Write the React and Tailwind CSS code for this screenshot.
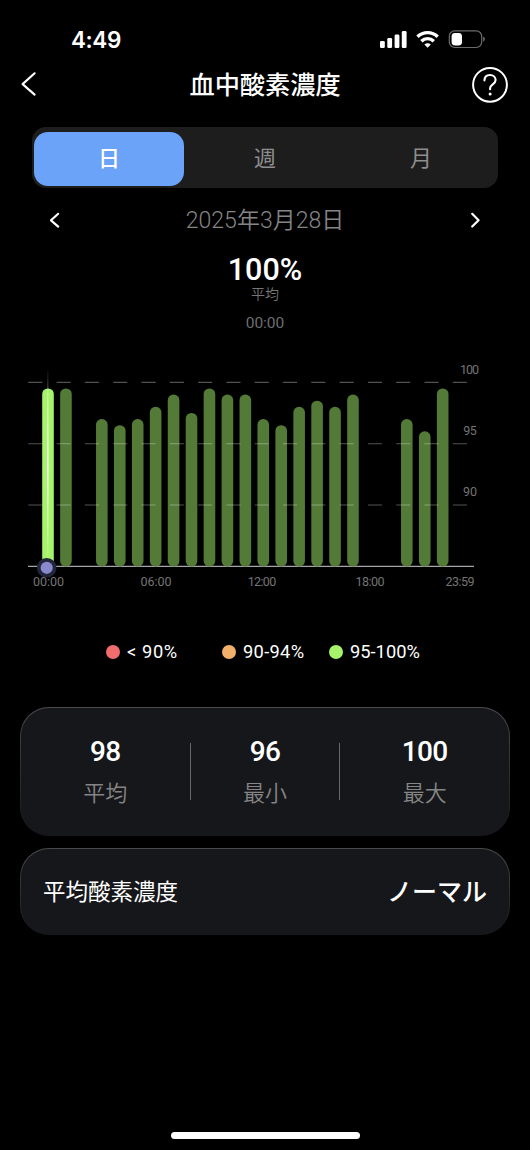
import React, { useState } from 'react';

// half-percent steps below the 100% mark, one entry per hour (null = no reading)
const hourly = [0, 0, null, 5, 6, 5, 3, 1, 4, 0, 1, 1, 5, 6, 3, 2, 3, 1, null, null, 5, 7, 0];

const tabs = ['日', '週', '月'];

const legend = [
  { label: '< 90%', dot: 'bg-[#f16c6c]', width: 'w-[116px]', text: 'tracking-[0.6px]' },
  { label: '90-94%', dot: 'bg-[#f2b06b]', width: 'w-[107px]', text: 'tracking-[0.3px]' },
  { label: '95-100%', dot: 'bg-[#a6f36b]', width: 'w-[92px]', text: 'tracking-normal' },
];

const stats = [
  { value: '98', label: '平均' },
  { value: '96', label: '最小' },
  { value: '100', label: '最大' },
];

function StatusBar() {
  return (
    <div className="flex h-[60px] items-start justify-between pt-[26px] pr-11 pl-[71px]">
      <span className="font-[Inter,sans-serif] text-[22.5px] leading-7 font-semibold tracking-[-0.4px]">4:49</span>
      <div className="flex items-center pt-[3px]">
        <svg width="28" height="20" viewBox="0 0 28 20" fill="white">
          <rect x="0" y="12" width="4.8" height="7" rx="1.3" />
          <rect x="7.3" y="9" width="4.8" height="10" rx="1.3" />
          <rect x="14.6" y="5.6" width="4.8" height="13.4" rx="1.3" />
          <rect x="21.8" y="2" width="4.8" height="17" rx="1.3" />
        </svg>
        <svg width="24" height="20" viewBox="0 0 24 20" className="ml-2" fill="none" stroke="white" strokeWidth="3.4">
          <path d="M1.5 7.8a14.4 14.4 0 0 1 20.2 0" />
          <path d="M5.4 12.2a8.8 8.8 0 0 1 12.4 0" />
          <path d="M11.6 18.8l-3.2-3.3a4.6 4.6 0 0 1 6.4 0z" fill="white" stroke="none" />
        </svg>
        <svg width="38" height="20" viewBox="0 0 38 20" className="ml-2">
          <rect x="1.3" y="1.9" width="32.4" height="16.6" rx="5.4" fill="none" stroke="#6b6b6b" strokeWidth="1.2" />
          <rect x="3.6" y="4" width="10.4" height="12.4" rx="3.4" fill="white" />
          <path d="M35.2 7.5v5.2c1.2-.4 1.7-1.4 1.7-2.6s-.5-2.2-1.7-2.6z" fill="#6b6b6b" />
        </svg>
      </div>
    </div>
  );
}

function Header() {
  return (
    <header className="flex h-[67px] items-start justify-between pt-[6px] pr-[23px] pl-5">
      <button className="mt-1.5 w-9" aria-label="戻る">
        <svg width="18" height="26" viewBox="0 0 18 26" fill="none" stroke="white" strokeWidth="2.1" strokeLinecap="round" strokeLinejoin="round">
          <path d="M14.6 1.3L2.6 12.1l12 10.5" />
        </svg>
      </button>
      <h1 className="ml-[3px] pt-px text-[25.2px] leading-[38px] font-medium">血中酸素濃度</h1>
      <button className="w-9" aria-label="ヘルプ">
        <svg width="38" height="38" viewBox="0 0 38 38" fill="none" stroke="white" strokeLinecap="round">
          <circle cx="19" cy="18.8" r="16.9" strokeWidth="2" />
          <path d="M13.4 14.4c.2-3.4 2.5-5.4 5.6-5.4 3.3 0 5.6 2.1 5.6 5 0 4.3-5.5 4.4-5.5 8.3v1" strokeWidth="2.1" />
          <circle cx="19.1" cy="27.9" r="1.5" fill="white" stroke="none" />
        </svg>
      </button>
    </header>
  );
}

function Chart() {
  return (
    <svg width="530" height="250" viewBox="0 350 530 250" className="block shrink-0">
      <defs>
        <linearGradient id="cursor" gradientUnits="userSpaceOnUse" x1="0" y1="368" x2="0" y2="566">
          <stop offset="0" stopColor="white" stopOpacity="0" />
          <stop offset="0.5" stopColor="white" />
          <stop offset="1" stopColor="white" stopOpacity="0" />
        </linearGradient>
      </defs>
      <path d="M28 566.4h446" stroke="#a5a5a9" strokeWidth="1.2" />
      {hourly.map((step, i) => {
        if (step === null) return null;
        const top = 388.4 + step * 6.13;
        return (
          <rect
            key={i}
            x={42.2 + i * 17.94}
            y={top}
            width="11.6"
            height={566.6 - top}
            rx="5.6"
            fill={i === 0 ? '#a6f36b' : '#537a36'}
          />
        );
      })}
      {[382.4, 443.7, 505].map((y) => (
        <path key={y} d={`M28.3 ${y}H467`} stroke="white" strokeOpacity="0.32" strokeWidth="1.1" strokeDasharray="14.1 14.2" />
      ))}
      <rect x="47" y="368" width="1.5" height="198" fill="url(#cursor)" />
      <circle cx="46.7" cy="567.8" r="9.8" fill="#22263a" />
      <circle cx="46.7" cy="567.8" r="6.1" fill="#8a89cd" />
      <g fill="#747474" fontSize="12.5" textAnchor="middle">
        <text x="469.5" y="373.8" textLength="19">100</text>
        <text x="470" y="435.2" textLength="13.5">95</text>
        <text x="470" y="496.4" textLength="14">90</text>
        <text x="48.5" y="586" textLength="31">00:00</text>
        <text x="156" y="586" textLength="31">06:00</text>
        <text x="262" y="586" textLength="28.5">12:00</text>
        <text x="370" y="586" textLength="29">18:00</text>
        <text x="460" y="586" textLength="29">23:59</text>
      </g>
    </svg>
  );
}

export default function App() {
  const [active, setActive] = useState('日');

  return (
    <div className="flex h-[1150px] w-[530px] flex-col overflow-hidden bg-black font-[Roboto,'Noto_Sans_CJK_JP',sans-serif] text-white">
      <StatusBar />
      <Header />

      {/* Period switch */}
      <div className="mr-8 ml-8 flex h-[61px] shrink-0 rounded-[14px] bg-[#1d1d1d] pt-[5px] pb-0.5 pl-0.5">
        {tabs.map((tab) => (
          <button
            key={tab}
            onClick={() => setActive(tab)}
            className={
              tab === active
                ? 'mr-[3px] w-[150px] shrink-0 rounded-[14px] bg-[#6ba3f8] pb-px text-[22px] font-medium text-white'
                : 'w-[156px] shrink-0 pb-px text-[22px] text-[#8e8e8e]'
            }
          >
            {tab}
          </button>
        ))}
      </div>

      {/* Date navigation */}
      <div className="flex h-16 shrink-0 items-center justify-between px-12">
        <svg width="14" height="18" viewBox="0 0 14 18" fill="none" stroke="white" strokeWidth="2.2" strokeLinecap="round" strokeLinejoin="round">
          <path d="M10.2 2.8L3 9.3l7.2 6.3" />
        </svg>
        <span className="pt-[3px] text-[23px] font-[350] text-[#858585]">2025年3月28日</span>
        <svg width="14" height="18" viewBox="0 0 14 18" fill="none" stroke="white" strokeWidth="2.2" strokeLinecap="round" strokeLinejoin="round">
          <path d="M4.2 2.8l6.4 6.4-6.4 6.3" />
        </svg>
      </div>

      <div className="flex h-[98px] shrink-0 flex-col items-center pt-0.5">
        <span className="text-[30.5px] leading-8 font-medium">100%</span>
        <span className="text-[14px] leading-4 font-[350] text-[#777]">平均</span>
        <span className="mt-[13px] text-[15.5px] leading-4 text-[#6f6f6f]">00:00</span>
      </div>

      <Chart />

      {/* Legend */}
      <div className="flex h-[107px] shrink-0 items-start pt-10 pl-[106px]">
        {legend.map((item) => (
          <div key={item.label} className={`flex shrink-0 items-center gap-[7px] ${item.width}`}>
            <span className={`h-3.5 w-3.5 shrink-0 rounded-full ${item.dot}`} />
            <span className={`text-[18.3px] leading-6 whitespace-nowrap ${item.text}`}>{item.label}</span>
          </div>
        ))}
      </div>

      <section className="mx-5 flex h-[129px] shrink-0 items-center rounded-[29px] bg-gradient-to-b from-[#4b4b4b] to-[#16171a] p-px">
        <div className="flex h-full w-full items-center rounded-[28px] bg-[#16171a]">
          {stats.map((stat, i) => (
            <React.Fragment key={stat.label}>
              {i > 0 && <div className="h-[57px] w-px bg-[#68686a]" />}
              <div className={`flex flex-col items-center pt-0.5 ${i === 1 ? 'w-[149px]' : 'w-[169px]'}`}>
                <span className="text-[28px] leading-8 font-medium tracking-[-0.6px]">{stat.value}</span>
                <span className="mt-2.5 text-[22px] leading-8 font-[350] text-[#858585]">{stat.label}</span>
              </div>
            </React.Fragment>
          ))}
        </div>
      </section>

      <section className="mx-5 mt-3 flex h-[87px] shrink-0 rounded-[29px] bg-gradient-to-b from-[#4b4b4b] to-[#16171a] p-px">
        <div className="flex h-full w-full items-center justify-between rounded-[28px] bg-[#16171a] px-[22px]">
          <span className="pt-[3px] text-[22.5px]">平均酸素濃度</span>
          <span className="pt-0.5 text-[25px] font-medium">ノーマル</span>
        </div>
      </section>

      {/* Home indicator */}
      <div className="mx-auto mt-auto mb-[11px] h-[7px] w-[189px] rounded-full bg-white" />
    </div>
  );
}
